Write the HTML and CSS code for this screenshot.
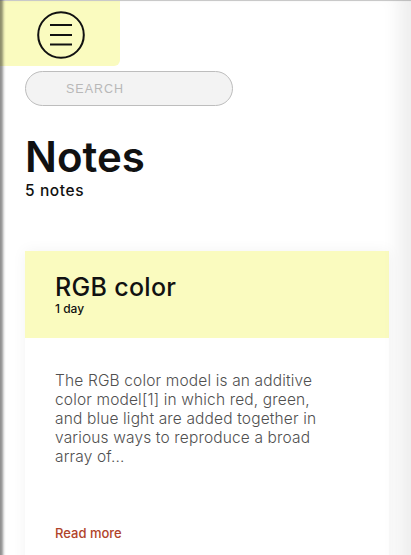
FILE: index.html
```html
<!DOCTYPE html>
<html lang="en">
<head>
<meta charset="utf-8">
<title>Notes</title>
<link rel="stylesheet" href="styles.css">
</head>
<body>
<div class="frame">
  <header class="topbar">
    <button class="menu-btn" aria-label="Menu">
      <svg width="48" height="48" viewBox="0 0 48 48" fill="none" stroke="#111" stroke-width="2">
        <circle cx="24" cy="24" r="22.8"/>
        <line x1="13" y1="14" x2="35" y2="14"/>
        <line x1="13" y1="24" x2="35" y2="24"/>
        <line x1="13" y1="33.5" x2="35" y2="33.5"/>
      </svg>
    </button>
  </header>
  <div class="search"><span class="search-label">SEARCH</span></div>
  <section class="heading">
    <h1 class="title">Notes</h1>
    <p class="count">5 notes</p>
  </section>
  <article class="card">
    <div class="card-head">
      <h2 class="card-title">RGB color</h2>
      <p class="card-date">1 day</p>
    </div>
    <div class="card-body">
      <p class="card-text">The RGB color model is an additive<br>color model[1] in which red, green,<br>and blue light are added together in<br>various ways to reproduce a broad<br>array of...</p>
      <a class="read-more" href="#">Read more</a>
    </div>
  </article>
</div>
</body>
</html>
```
FILE: styles.css
```css
* { box-sizing: border-box; }
html, body { margin: 0; padding: 0; background: #fff; }
body { font-family: "Inter", "Lato", sans-serif; color: #111; }
.frame { position: relative; min-height: 555px; overflow: hidden; }
.frame::after {
  content: "";
  position: absolute;
  inset: 0;
  pointer-events: none;
  box-shadow: inset 4px 0 3px -1px rgba(0,0,0,0.45), inset -22px 0 18px -10px rgba(0,0,0,0.07), inset 0 1px 0 #d9d9d9;
}
.topbar {
  width: 120px; height: 66px;
  background: #fafbbf;
  border-bottom-right-radius: 6px;
  display: flex; align-items: flex-start; justify-content: center;
  padding-top: 11px; padding-left: 1px;
}
.menu-btn { border: 0; background: none; padding: 0; width: 48px; height: 48px; cursor: pointer; }
.menu-btn svg { display: block; }
.search {
  margin: 5px 0 0 25px;
  width: 208px; height: 35px;
  border: 1px solid #bdbdbd; border-radius: 18px;
  background: #f3f3f3;
  display: flex; align-items: center;
  padding-left: 40px;
}
.search-label { font-family: "Liberation Sans", Arial, sans-serif; font-size: 12.5px; letter-spacing: 1px; color: #b8b8b8; }
.heading { padding: 28px 0 0 25px; }
.title { margin: 0; font-size: 42px; font-weight: 600; line-height: 46px; letter-spacing: 0; }
.count { margin: 1px 0 0; font-size: 15.5px; font-weight: 500; line-height: 20px; letter-spacing: 0.6px; }
.card { margin: 50px 22px 0 25px; box-shadow: 0 0 14px rgba(0,0,0,0.05); }
.card-head { background: #fafbbf; height: 87px; padding: 21px 30px 0; }
.card-title { margin: 0; font-size: 25px; font-weight: 500; line-height: 30px; letter-spacing: 0.3px; }
.card-date { margin: 0; font-size: 12px; font-weight: 500; line-height: 13px; }
.card-body { background: #fff; padding: 33px 30px 40px; }
.card-text { margin: 0; font-size: 15.5px; font-weight: 300; line-height: 19px; letter-spacing: 0.15px; color: #505050; }
.read-more { display: inline-block; margin-top: 59px; font-size: 13px; font-weight: 500; color: #b0442a; text-decoration: none; }
```
